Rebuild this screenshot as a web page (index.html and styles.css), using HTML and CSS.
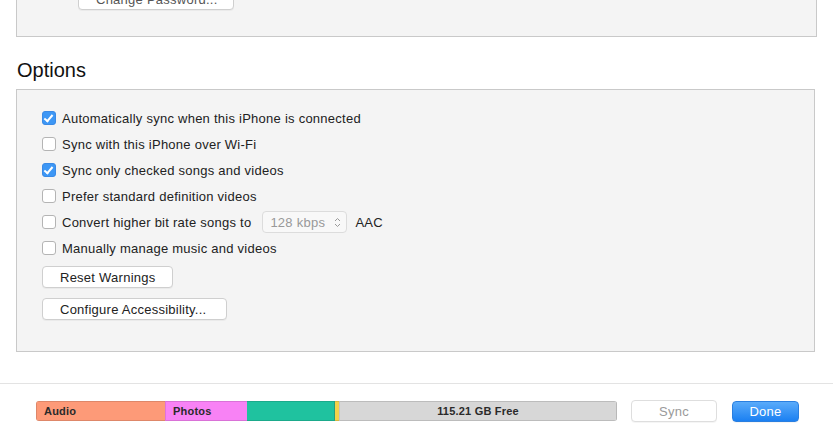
FILE: index.html
```html
<!DOCTYPE html>
<html lang="en">
<head>
  <meta charset="UTF-8">
  <title>iPhone Summary</title>
  <link rel="stylesheet" href="styles.css">
</head>
<body>
  <div class="page">
    <div class="box top-box">
      <button class="btn pw-btn">Change Password...</button>
    </div>

    <h2 class="section-title">Options</h2>

    <div class="box options">
      <label class="row"><span class="check on"></span>Automatically sync when this iPhone is connected</label>
      <label class="row"><span class="check"></span>Sync with this iPhone over Wi-Fi</label>
      <label class="row"><span class="check on"></span>Sync only checked songs and videos</label>
      <label class="row"><span class="check"></span>Prefer standard definition videos</label>
      <label class="row"><span class="check"></span>Convert higher bit rate songs to
        <span class="popup">128 kbps
          <svg width="7" height="11" viewBox="0 0 7 11"><path d="M1 4 L3.5 1.5 L6 4 M1 7 L3.5 9.5 L6 7" fill="none" stroke="#9a9a9a" stroke-width="1"/></svg>
        </span>
        <span class="after">AAC</span>
      </label>
      <label class="row"><span class="check"></span>Manually manage music and videos</label>
      <button class="btn reset-btn">Reset Warnings</button>
      <button class="btn access-btn">Configure Accessibility...</button>
    </div>
  </div>

  <div class="footer">
    <div class="storage">
      <div class="seg audio">Audio</div>
      <div class="seg photos">Photos</div>
      <div class="seg apps"></div>
      <div class="seg other"></div>
      <div class="seg free">115.21 GB Free</div>
    </div>
    <button class="btn sync-btn">Sync</button>
    <button class="btn done-btn">Done</button>
  </div>
</body>
</html>
```

FILE: styles.css
```css
body {
  margin: 0;
  background-color: #fff;
  font-family: "Liberation Sans", Arial, sans-serif;
  font-size: 13px;
  letter-spacing: 0.25px;
  color: #222;
  width: 833px;
  height: 436px;
  overflow: hidden;
}
.page {
  padding: 0 16px;
}
.box {
  background-color: #f4f4f4;
  border: 1px solid #c9c9c9;
  width: 799px;
}
.top-box {
  display: flow-root;
  border-top: none;
  height: 36px;
}
.btn {
  font-family: "Liberation Sans", Arial, sans-serif;
  font-size: 13px;
  letter-spacing: 0.25px;
  color: #222;
  background-color: #fff;
  border: 1px solid #cfcfcf;
  border-radius: 4px;
  padding: 0;
  height: 22px;
  box-shadow: 0 1px 0 rgba(0, 0, 0, 0.04);
  text-align: left;
}
.pw-btn {
  display: block;
  margin: -12px 0 0 61px;
  width: 156px;
  padding-left: 17px;
  color: #555;
}
.section-title {
  font-size: 20px;
  font-weight: normal;
  letter-spacing: 0;
  margin: 21px 0 7px 1px;
  line-height: 24px;
  color: #111;
}
.options {
  padding-top: 15px;
  box-sizing: border-box;
  height: 263px;
}
.row {
  display: flex;
  align-items: center;
  height: 26px;
  padding-left: 25px;
}
.check {
  width: 12px;
  height: 12px;
  border: 1px solid #b4b4b4;
  border-radius: 3px;
  background-color: #fff;
  margin-right: 6px;
  position: relative;
}
.check.on {
  background-color: #3d97f5;
  border-color: #3a8ae6;
}
.check.on::after {
  content: "";
  position: absolute;
  left: 3px;
  top: 1px;
  width: 3px;
  height: 7px;
  border: solid #fff;
  border-width: 0 2px 2px 0;
  transform: rotate(40deg);
}
.popup {
  display: inline-flex;
  align-items: center;
  justify-content: space-between;
  margin-left: 11px;
  width: 71px;
  height: 20px;
  padding: 0 5px 0 7px;
  border: 1px solid #dcdcdc;
  border-radius: 4px;
  background-color: #f8f8f8;
  color: #999;
}
.after {
  margin-left: 8px;
}
.reset-btn, .access-btn {
  display: block;
  margin-left: 25px;
  padding-left: 17px;
}
.reset-btn {
  margin-top: 5px;
  width: 131px;
}
.access-btn {
  margin-top: 10px;
  width: 185px;
}
.footer {
  margin-top: 31px;
  border-top: 1px solid #e3e3e3;
  display: flex;
  align-items: center;
  padding: 16px 0 0 36px;
}
.storage {
  display: flex;
  width: 581px;
  height: 20px;
  border-radius: 3px;
  overflow: hidden;
  font-size: 11px;
  font-weight: bold;
  letter-spacing: 0.2px;
  color: #2a2a2a;
}
.seg {
  height: 100%;
  box-sizing: border-box;
  display: flex;
  align-items: center;
  border-top: 1px solid rgba(0, 0, 0, 0.12);
  border-bottom: 1px solid rgba(0, 0, 0, 0.12);
}
.audio {
  width: 129px;
  background-color: #fd9a78;
  padding-left: 7px;
  border-left: 1px solid rgba(0, 0, 0, 0.12);
}
.photos {
  width: 82px;
  background-color: #f882f5;
  padding-left: 7px;
  border-left: 1px solid rgba(0, 0, 0, 0.1);
}
.apps {
  width: 88px;
  background-color: #1fc29f;
  border-right: 1px solid #2a9c7c;
}
.other {
  width: 4px;
  background-color: #f4d24a;
}
.free {
  flex: 1;
  background-color: #d7d7d7;
  justify-content: center;
  border-right: 1px solid #b8b8b8;
  border-left: 1px solid #c4c4c4;
}
.sync-btn {
  margin-left: 14px;
  width: 86px;
  height: 22px;
  text-align: center;
  color: #9a9a9a;
  border-color: #dedede;
}
.done-btn {
  margin-left: 15px;
  width: 67px;
  height: 21px;
  text-align: center;
  color: #fff;
  border: 1px solid #2a7fe0;
  background: linear-gradient(#5aabfa, #1b80f2);
}
```
